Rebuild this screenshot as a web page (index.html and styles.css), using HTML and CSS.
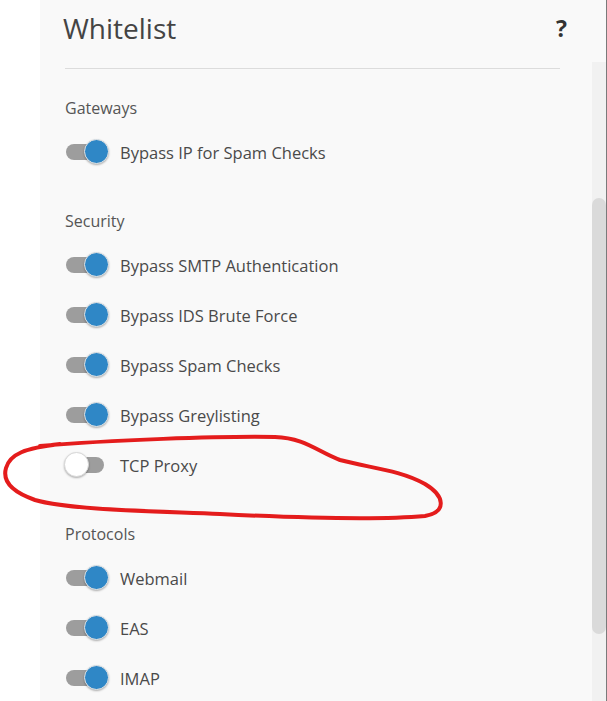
FILE: index.html
```html
<!DOCTYPE html>
<html lang="en">

<head>
  <meta charset="UTF-8" />
  <meta name="viewport" content="width=device-width, initial-scale=1.0" />
  <title>Whitelist</title>
  <link rel="stylesheet" href="styles.css">
</head>

<body>
  <div class="frame">
    <div class="panel">
      <div class="header">
        <h1>Whitelist</h1>
        <span class="help">?</span>
      </div>

      <div class="section">
        <div class="section-title">Gateways</div>
        <label class="row"><span class="toggle on"></span>Bypass IP for Spam Checks</label>
      </div>

      <div class="section">
        <div class="section-title">Security</div>
        <label class="row"><span class="toggle on"></span>Bypass SMTP Authentication</label>
        <label class="row"><span class="toggle on"></span>Bypass IDS Brute Force</label>
        <label class="row"><span class="toggle on"></span>Bypass Spam Checks</label>
        <label class="row"><span class="toggle on"></span>Bypass Greylisting</label>
        <label class="row"><span class="toggle"></span>TCP Proxy</label>
      </div>

      <div class="section">
        <div class="section-title">Protocols</div>
        <label class="row"><span class="toggle on"></span>Webmail</label>
        <label class="row"><span class="toggle on"></span>EAS</label>
        <label class="row"><span class="toggle on"></span>IMAP</label>
      </div>
    </div>

    <div class="rail">
      <div class="track"><div class="thumb"></div></div>
    </div>
  </div>

  <!-- hand drawn marker round the TCP Proxy row -->
  <svg class="marker" width="460" height="100" viewBox="0 0 460 100">
    <path d="M40 12 C 110 6, 220 2, 275 3 C 305 4, 318 18, 340 26 C 370 34, 400 36, 425 50 C 445 62, 447 78, 425 82 C 380 86, 300 84, 220 80 C 150 77, 70 76, 35 66 C 12 58, 2 48, 6 34 C 10 20, 25 14, 60 10"
      fill="none" stroke="#e41c1c" stroke-width="4" stroke-linecap="round" />
  </svg>
</body>

</html>
```

FILE: styles.css
```css
body {
  margin: 0;
  background-color: #fff;
  font-family: "Open Sans", "Noto Sans", sans-serif;
  color: #444;
  overflow: hidden;
  height: 701px;
}

.frame {
  display: flex;
  margin-left: 40px;
  height: 701px;
  border-right: 1px solid #7a7a7a;
}

.panel {
  flex: 1;
  background-color: #f9f9f9;
  padding: 0 32px 0 25px;
}

.header {
  display: flex;
  justify-content: space-between;
  align-items: center;
  height: 68px;
  border-bottom: 1px solid #dcdcdc;
}

.header h1 {
  margin: 0 0 12px -2px;
  font-size: 28px;
  font-weight: 400;
  color: #444;
}

.help {
  font-size: 23px;
  font-weight: 700;
  color: #333;
  margin: 0 -7px 12px 0;
}

.section {
  padding-top: 28px;
}

.section + .section {
  padding-top: 33px;
}

.section-title {
  font-size: 16px;
  line-height: 22px;
  color: #555;
  margin-bottom: 8px;
}

.row {
  display: flex;
  align-items: center;
  height: 50px;
  font-size: 16.5px;
  color: #4a4a4a;
}

.toggle {
  position: relative;
  width: 38px;
  height: 16px;
  border-radius: 8px;
  background-color: #9d9d9d;
  margin: 0 16px 0 1px;
}

.toggle::after {
  content: "";
  position: absolute;
  top: -5px;
  left: -2px;
  width: 23px;
  height: 23px;
  border-radius: 50%;
  background-color: #fff;
  border: 1px solid #d8d8d8;
  box-shadow: 0 1px 2px rgba(0, 0, 0, 0.3);
}

.toggle.on::after {
  left: 18px;
  background-color: #2f87c6;
  border: 1px solid #e6e6e6;
}

.rail {
  width: 14px;
  background-color: #f9f9f9;
  padding-top: 62px;
}

.track {
  height: 100%;
  background-color: #f1f1f1;
  padding-top: 136px;
}

.thumb {
  height: 436px;
  border-radius: 7px;
  background-color: #dadada;
}

.marker {
  position: absolute;
  left: 0;
  top: 434px;
}
```
